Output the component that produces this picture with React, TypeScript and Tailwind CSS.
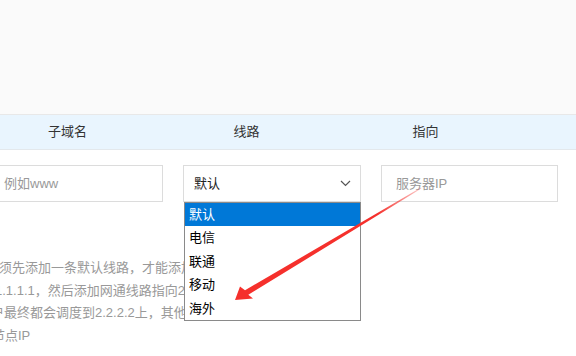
import React from 'react';

const font = { fontFamily: '"Liberation Sans", "Noto Sans CJK SC", sans-serif' };

const options = ['默认', '电信', '联通', '移动', '海外'];

const App: React.FC = () => {
  return (
    <div className="relative w-[576px] h-[356px] overflow-hidden bg-white" style={font}>
      {/* top blank area */}
      <div className="h-[115px] bg-[#fafafa] border-b border-[#e8e8e8]" />

      {/* table header */}
      <div className="h-[35px] bg-[#e9f5fe] border-b border-[#e3e8ec] flex items-center -ml-[22px] text-[13px] text-[#333]">
        <div className="w-[179px] text-center shrink-0">子域名</div>
        <div className="w-[179px] text-center shrink-0">线路</div>
        <div className="w-[179px] text-center shrink-0">指向</div>
      </div>

      {/* input row */}
      <div className="mt-[15px] flex gap-[20px] -ml-[15px] text-[13px]">
        <div className="w-[178px] h-[37px] shrink-0 border border-[#dcdcdc] flex items-center pl-[18px] text-[#999]">
          例如www
        </div>
        <div className="relative w-[178px] h-[37px] shrink-0 border border-[#dcdcdc] flex items-center justify-between pl-[10px] pr-[9px] text-[#222]">
          <span>默认</span>
          <svg width="11" height="7" viewBox="0 0 11 7" fill="none">
            <path d="M1 1l4.5 4.5L10 1" stroke="#555" strokeWidth="1.2" />
          </svg>
          {/* open listbox */}
          <div className="absolute left-0 top-[36px] w-[177px] bg-white border border-[#8a8a8a] text-[13px] text-black z-10">
            {options.map((o, i) => (
              <div
                key={o}
                className={`h-[23.4px] flex items-center pl-[4px] ${i === 0 ? 'bg-[#0078d7] text-white' : ''}`}
              >
                {o}
              </div>
            ))}
          </div>
        </div>
        <div className="w-[177px] h-[37px] shrink-0 border border-[#dcdcdc] flex items-center pl-[14px] text-[#999]">
          服务器IP
        </div>
      </div>

      {/* tips */}
      <div className="pt-[55px] text-[13px] leading-[22.7px] text-[#999] whitespace-nowrap">
        <div className="-ml-[1px]">须先添加一条默认线路，才能添加其他线路</div>
        <div className="-ml-[5px]">1.1.1.1，然后添加网通线路指向2.2.2.2，</div>
        <div className="-ml-[9px]">户最终都会调度到2.2.2.2上，其他用户</div>
        <div className="-ml-[8px]">节点IP</div>
      </div>

      {/* red arrow annotation */}
      <svg className="absolute left-0 top-0 z-20 pointer-events-none" width="576" height="356" viewBox="0 0 576 356">
        <defs>
          <linearGradient id="fade" x1="246" y1="292" x2="421" y2="188" gradientUnits="userSpaceOnUse">
            <stop offset="0" stopColor="#f5302c" />
            <stop offset="0.75" stopColor="#f5302c" />
            <stop offset="1" stopColor="#f5302c" stopOpacity="0.25" />
          </linearGradient>
        </defs>
        <polygon
          points="235,300 240,286.5 245,290.2 421,187.6 421.3,188.6 248.3,294.8 253,298.5"
          fill="url(#fade)"
        />
      </svg>
    </div>
  );
};

export default App;
